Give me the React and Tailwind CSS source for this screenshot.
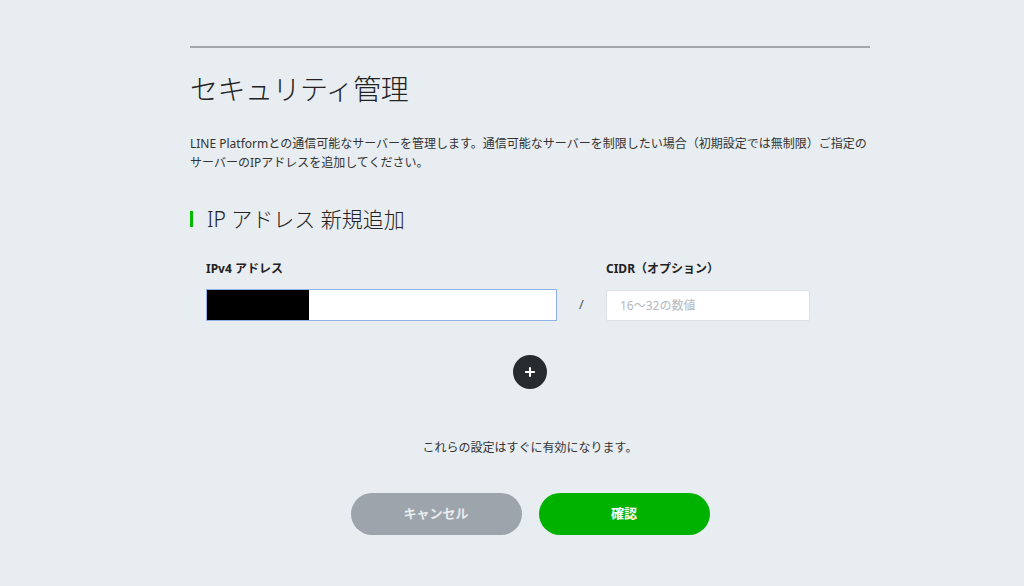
import { Plus } from 'lucide-react'

const font = { fontFamily: '"Noto Sans", "Noto Sans CJK JP", sans-serif' }

const App = () => {
  return (
    <div className="min-h-[586px] w-full bg-[#e8edf1] text-[#1e1e1e]" style={font}>
      <div className="ml-[190px] w-[680px] pt-[46px]">
        {/* Top rule */}
        <div className="h-[2px] bg-[#a3a7ab]" />

        {/* Title */}
        <h1 className="mt-[23px] text-[28px] leading-[36px] font-light tracking-[-0.5px] text-[#222]">
          セキュリティ管理
        </h1>

        <p className="mt-[27px] text-[12px] leading-[19px] text-[#333]">
          LINE Platformとの通信可能なサーバーを管理します。通信可能なサーバーを制限したい場合（初期設定では無制限）ご指定のサーバーのIPアドレスを追加してください。
        </p>

        {/* Section header */}
        <div className="mt-[33px] flex items-center gap-[14px]">
          <div className="h-[16px] w-[3px] bg-[#00b900]" />
          <h2 className="text-[21px] leading-[28px] font-light text-[#222]">IP アドレス 新規追加</h2>
        </div>

        {/* Form */}
        <div className="mt-[27px] flex pl-[16px]">
          <div className="flex w-[351px] flex-col">
            <label className="text-[12px] font-bold leading-[18px] text-[#222]">IPv4 アドレス</label>
            <div className="mt-[11px] flex h-[32px] w-full border border-[#8fb1ea] bg-white">
              <div className="h-full w-[102px] bg-black" />
            </div>
          </div>
          <div className="flex w-[49px] items-end justify-center pb-[7px] text-[13px] text-[#555]">/</div>
          <div className="flex w-[204px] flex-col">
            <label className="text-[12px] font-bold leading-[18px] text-[#222]">CIDR（オプション）</label>
            <div className="mt-[12px] flex h-[31px] w-full items-center rounded-[2px] border border-[#dde1e5] bg-white px-[13px] text-[12px] text-[#b5b9bd]">
              16～32の数値
            </div>
          </div>
        </div>

        {/* Add button */}
        <div className="mt-[34px] flex justify-center">
          <button className="flex h-[34px] w-[34px] items-center justify-center rounded-full bg-[#272a2f] text-white">
            <Plus size={14} strokeWidth={3.5} />
          </button>
        </div>

        <p className="mt-[50px] text-center text-[12px] leading-[18px] text-[#333]">
          これらの設定はすぐに有効になります。
        </p>

        <div className="mt-[36px] flex justify-center gap-[17px]">
          <button className="h-[42px] w-[171px] rounded-full bg-[#9ea4ab] text-[13px] font-bold text-[#e9ecef]">
            キャンセル
          </button>
          <button className="h-[42px] w-[171px] rounded-full bg-[#00b200] text-[13px] font-bold text-white">
            確認
          </button>
        </div>
      </div>
    </div>
  )
}

export default App
